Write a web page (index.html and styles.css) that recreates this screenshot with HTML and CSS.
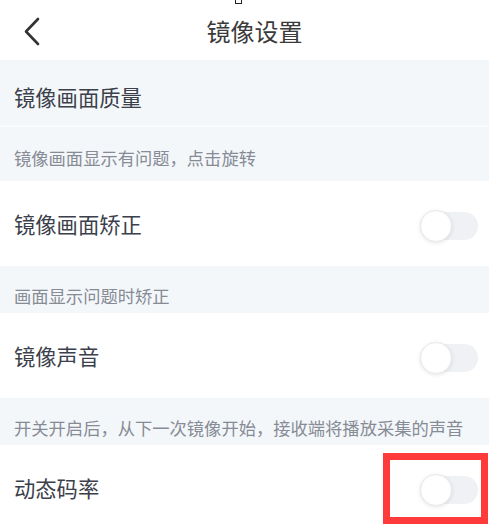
FILE: index.html
```html
<!DOCTYPE html>
<html lang="zh-CN">
<head>
  <meta charset="UTF-8" />
  <meta name="viewport" content="width=device-width, initial-scale=1.0"/>
  <title>镜像设置</title>
  <link rel="stylesheet" href="styles.css">
</head>
<body>

  <!-- Header -->
  <div class="header">
    <span class="notch"></span>
    <svg class="back" width="20" height="30" viewBox="0 0 20 30">
      <polyline points="16,3 4,15.5 16,28" fill="none" stroke="#333" stroke-width="2.6" stroke-linecap="round" stroke-linejoin="round"/>
    </svg>
    <div class="title">镜像设置</div>
  </div>

  <!-- Quality -->
  <div class="row quality">镜像画面质量</div>
  <div class="hint first">镜像画面显示有问题，点击旋转</div>

  <!-- Correction -->
  <div class="row">
    <span>镜像画面矫正</span>
    <span class="switch"><span class="knob"></span></span>
  </div>
  <div class="hint">画面显示问题时矫正</div>

  <!-- Sound -->
  <div class="row">
    <span>镜像声音</span>
    <span class="switch"><span class="knob"></span></span>
  </div>
  <div class="hint">开关开启后，从下一次镜像开始，接收端将播放采集的声音</div>

  <!-- Bitrate -->
  <div class="row marked">
    <span>动态码率</span>
    <span class="switch"><span class="knob"></span></span>
    <span class="mark"></span>
  </div>

</body>
</html>
```

FILE: styles.css
```css
* {
  margin: 0;
  padding: 0;
  box-sizing: border-box;
  font-family: "Noto Sans CJK SC", "Noto Sans", sans-serif;
}

body {
  background: white;
  width: 489px;
  overflow: hidden;
}

.header {
  position: relative;
  height: 60px;
  display: flex;
  align-items: center;
  background: white;
}

.notch {
  position: absolute;
  top: -2px;
  left: 235px;
  width: 7px;
  height: 6px;
  border: 1px solid #222;
  background: white;
}

.back {
  margin-left: 22px;
  margin-top: 2px;
}

.title {
  flex: 1;
  text-align: center;
  font-size: 24px;
  color: #3a3a3a;
  padding-right: 22px;
}

.row {
  height: 85px;
  padding: 0 11px 0 14px;
  display: flex;
  align-items: center;
  justify-content: space-between;
  font-size: 21.3px;
  color: #3b404b;
  background: white;
}

.row.quality {
  height: 67px;
  padding-top: 8px;
  background: #f4f7fa;
  border-bottom: 2px solid #fafbfd;
}

.hint {
  padding: 18px 14px 5px;
  line-height: 24px;
  font-size: 17.3px;
  color: #868b95;
  background: #f4f7fa;
}

.hint.first {
  height: 54px;
  padding-top: 19px;
}

.switch {
  position: relative;
  width: 58px;
  height: 28px;
  border-radius: 14px;
  background: #f0f1f4;
  margin-top: 4px;
}

.knob {
  position: absolute;
  left: 0;
  top: -2px;
  width: 32px;
  height: 32px;
  border-radius: 50%;
  background: white;
  border: 1px solid #e8e9ec;
  box-shadow: 0 1px 4px rgba(0, 0, 0, 0.1);
}

.row.marked {
  position: relative;
}

.mark {
  position: absolute;
  left: 383px;
  top: 8px;
  width: 105px;
  height: 71px;
  border: 7px solid #ff3a3a;
}
```
